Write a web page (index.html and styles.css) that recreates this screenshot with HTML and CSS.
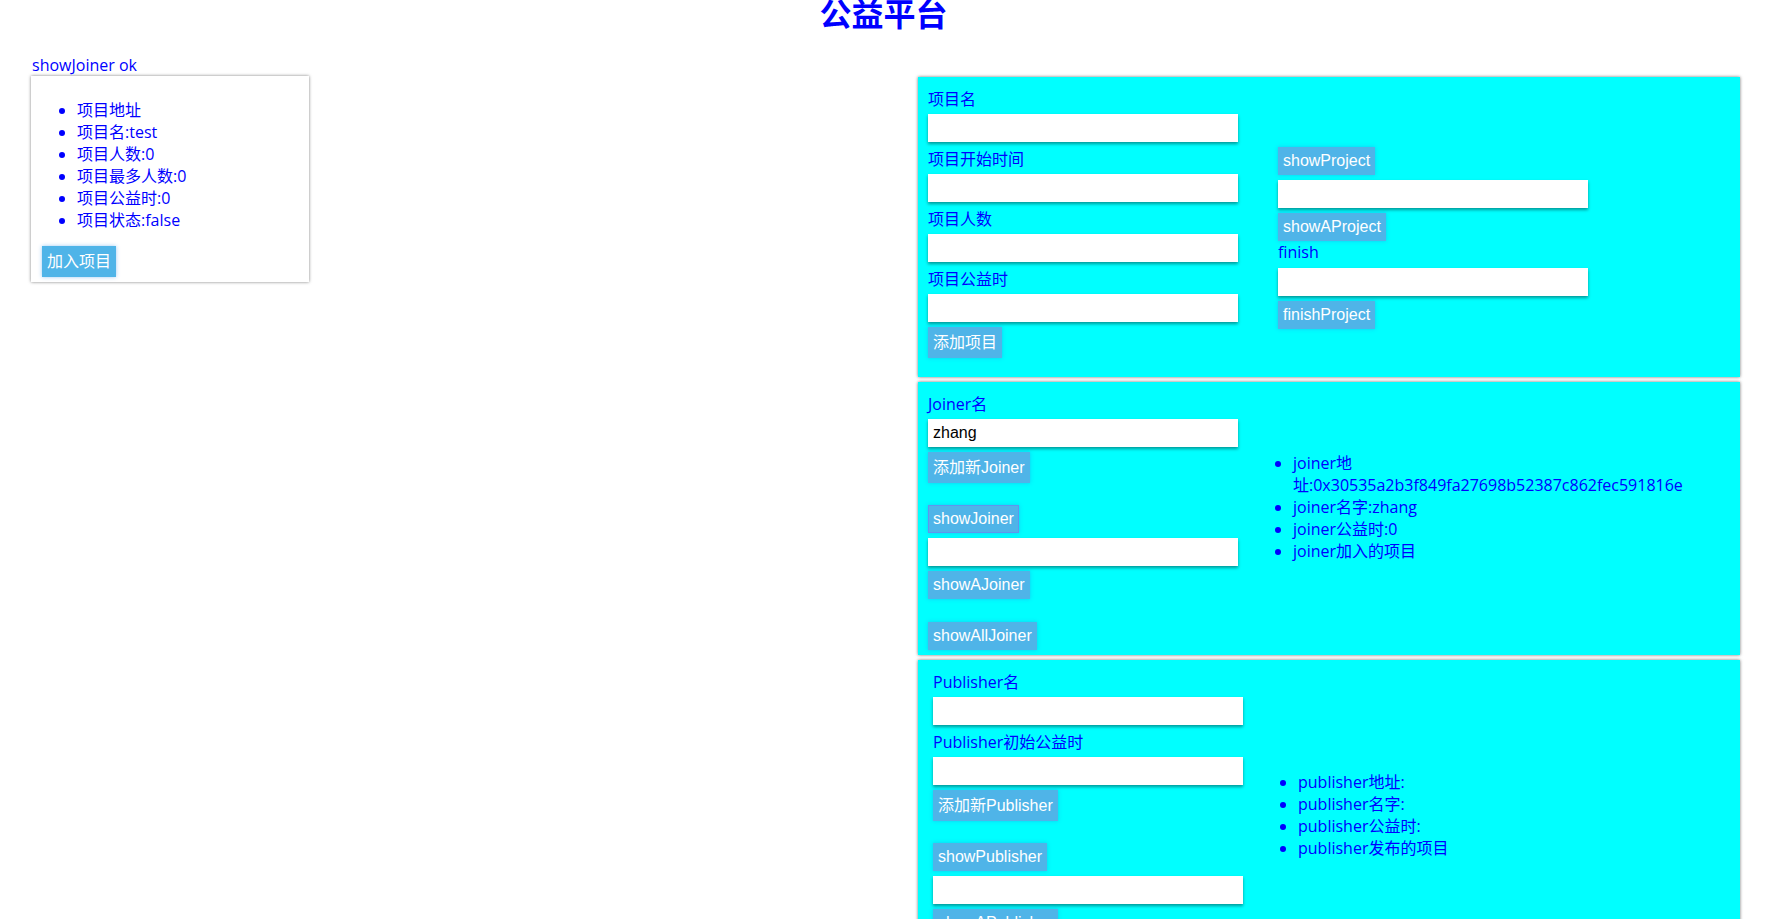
FILE: index.html
```html
<!DOCTYPE html>
<html lang="zh-CN">
<head>
<meta charset="utf-8">
<title>公益平台</title>
<link rel="stylesheet" href="styles.css">
</head>
<body>
<h1 class="title">公益平台</h1>
<div class="page">
  <aside class="side">
    <div class="status">showJoiner ok</div>
    <div class="card">
      <ul class="info">
        <li>项目地址</li>
        <li>项目名:test</li>
        <li>项目人数:0</li>
        <li>项目最多人数:0</li>
        <li>项目公益时:0</li>
        <li>项目状态:false</li>
      </ul>
      <button class="btn cjk">加入项目</button>
    </div>
  </aside>
  <main class="panels">
    <section class="panel panel-project">
      <div class="form">
        <label class="lbl">项目名</label>
        <input class="field" type="text">
        <label class="lbl">项目开始时间</label>
        <input class="field" type="text">
        <label class="lbl">项目人数</label>
        <input class="field" type="text">
        <label class="lbl">项目公益时</label>
        <input class="field" type="text">
        <button class="btn cjk">添加项目</button>
      </div>
      <div class="aside-col">
        <button class="btn">showProject</button>
        <input class="field" type="text">
        <button class="btn">showAProject</button>
        <label class="lbl">finish</label>
        <input class="field" type="text">
        <button class="btn">finishProject</button>
      </div>
    </section>
    <section class="panel panel-joiner">
      <div class="form">
        <label class="lbl">Joiner名</label>
        <input class="field" type="text" value="zhang">
        <button class="btn cjk">添加新Joiner</button>
        <button class="btn spaced active">showJoiner</button>
        <input class="field" type="text">
        <button class="btn">showAJoiner</button>
        <button class="btn spaced more">showAllJoiner</button>
      </div>
      <div class="aside-col">
        <ul class="details">
          <li>joiner地址:0x30535a2b3f849fa27698b52387c862fec591816e</li>
          <li>joiner名字:zhang</li>
          <li>joiner公益时:0</li>
          <li>joiner加入的项目</li>
        </ul>
      </div>
    </section>
    <section class="panel panel-publisher">
      <div class="form">
        <label class="lbl">Publisher名</label>
        <input class="field" type="text">
        <label class="lbl">Publisher初始公益时</label>
        <input class="field" type="text">
        <button class="btn cjk">添加新Publisher</button>
        <button class="btn spaced">showPublisher</button>
        <input class="field" type="text">
        <button class="btn">showAPublisher</button>
        <button class="btn spaced">showAllPublisher</button>
      </div>
      <div class="aside-col aside-low">
        <ul class="details">
          <li>publisher地址:</li>
          <li>publisher名字:</li>
          <li>publisher公益时:</li>
          <li>publisher发布的项目</li>
        </ul>
      </div>
    </section>
  </main>
</div>
</body>
</html>
```

FILE: styles.css
```css
html, body {
  margin: 0;
  padding: 0;
  background: #ffffff;
}

body {
  font-family: "Open Sans", "Noto Sans CJK SC", sans-serif;
  font-size: 16px;
  color: #0000ff;
}

.title {
  margin: -3px 0 0 0;
  padding-right: 13px;
  font-family: "Noto Sans CJK SC", sans-serif;
  font-size: 32px;
  line-height: 30px;
  font-weight: bold;
  color: #0000ff;
  text-align: center;
}

.page {
  display: flex;
  align-items: flex-start;
}

.side {
  width: 278px;
  margin-left: 31px;
  margin-top: 28px;
  flex-shrink: 0;
}

.status {
  line-height: 21px;
  padding-left: 1px;
}

.card {
  display: flow-root;
  background: #ffffff;
  box-shadow: 0 0 3px rgba(0, 0, 0, 0.5);
  padding: 0 0 5px 11px;
}

.info {
  margin: 23px 0 15px;
  padding-left: 35px;
  line-height: 22px;
}

.panels {
  width: 822px;
  margin-left: auto;
  margin-right: 40px;
  margin-top: 50px;
  display: flex;
  flex-direction: column;
  gap: 5px;
}

.panel {
  background: #00ffff;
  box-shadow: 0 0 3px rgba(0, 0, 0, 0.55);
  display: flex;
  align-items: flex-start;
  padding: 11px 10px 19px 10px;
}

.panel-joiner {
  padding-bottom: 5px;
}

.panel-publisher {
  padding: 11px 10px 5px 15px;
}

.form {
  width: 310px;
  flex-shrink: 0;
  display: flex;
  flex-direction: column;
  align-items: flex-start;
}

.aside-col {
  flex: 1;
  margin-left: 40px;
  padding-top: 59px;
  display: flex;
  flex-direction: column;
  align-items: flex-start;
}

.aside-low {
  padding-top: 100px;
}

.lbl {
  display: block;
  line-height: 22px;
  margin-bottom: 4px;
}

.field {
  display: block;
  width: 310px;
  height: 28px;
  box-sizing: border-box;
  border: none;
  outline: none;
  padding: 0 5px;
  margin: 0 0 5px 0;
  background: #ffffff;
  box-shadow: 0 2px 3px rgba(0, 0, 0, 0.4);
  font-family: "Liberation Sans", "Noto Sans CJK SC", sans-serif;
  font-size: 16px;
  color: #000000;
}

.field + .lbl {
  margin-top: 1px;
}

.btn + .field {
  margin-top: 5px;
}

.aside-col .lbl {
  margin-bottom: 5px;
}

.btn {
  display: block;
  margin: 0;
  padding: 5px;
  border: none;
  background: #4fb4e8;
  color: #ffffff;
  font-family: "Liberation Sans", "Noto Sans CJK SC", sans-serif;
  font-size: 16px;
  line-height: 18px;
  box-shadow: 0 0 4px rgba(40, 140, 230, 0.45);
  cursor: pointer;
}

.btn.cjk {
  line-height: 21px;
}

.btn.spaced {
  margin-top: 22px;
}

.btn.spaced.more {
  margin-top: 23px;
}

.btn.active {
  border: 1px solid #5f96ee;
  padding: 4px;
}

.details {
  margin: 0;
  padding-left: 15px;
  line-height: 22px;
}
```
